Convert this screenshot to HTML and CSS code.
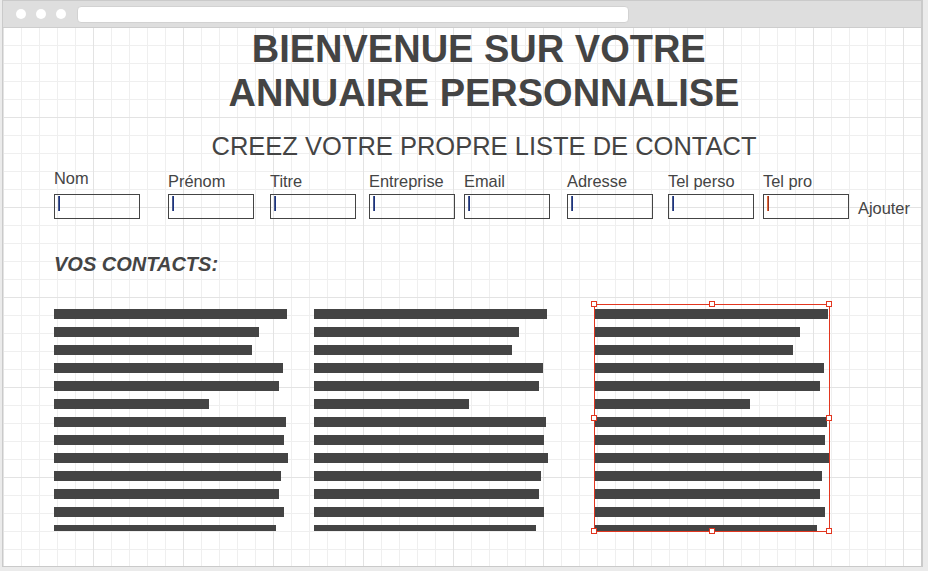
FILE: index.html
```html
<!DOCTYPE html>
<html lang="fr">
<head>
<meta charset="utf-8">
<title>Annuaire personnalisé</title>
<link rel="stylesheet" href="styles.css">
</head>
<body>
<div class="window">
  <div class="chrome">
    <span class="dot"></span><span class="dot"></span><span class="dot"></span>
    <div class="address"></div>
  </div>
  <main class="canvas">
    <header class="header">
      <h1 class="title">BIENVENUE SUR VOTRE&nbsp;<br>ANNUAIRE PERSONNALISE</h1>
      <h2 class="subtitle">CREEZ VOTRE PROPRE LISTE DE CONTACT</h2>
    </header>
    <form class="form">
      <label class="field field--raised"><span class="field-label">Nom</span><span class="input"><span class="caret"></span></span></label>
      <label class="field"><span class="field-label">Prénom</span><span class="input"><span class="caret"></span></span></label>
      <label class="field"><span class="field-label">Titre</span><span class="input"><span class="caret"></span></span></label>
      <label class="field"><span class="field-label">Entreprise</span><span class="input"><span class="caret"></span></span></label>
      <label class="field"><span class="field-label">Email</span><span class="input"><span class="caret"></span></span></label>
      <label class="field"><span class="field-label">Adresse</span><span class="input"><span class="caret"></span></span></label>
      <label class="field"><span class="field-label">Tel perso</span><span class="input"><span class="caret"></span></span></label>
      <label class="field field--active"><span class="field-label">Tel pro</span><span class="input"><span class="caret"></span></span></label>
      <span class="submit">Ajouter</span>
    </form>
    <h3 class="section-title">VOS CONTACTS:</h3>
    <div class="contacts">
      <div class="card">
        <div class="lines">
          <span class="bar"></span><span class="bar"></span><span class="bar"></span><span class="bar"></span><span class="bar"></span><span class="bar"></span><span class="bar"></span><span class="bar"></span><span class="bar"></span><span class="bar"></span><span class="bar"></span><span class="bar"></span><span class="bar"></span>
        </div>
      </div>
      <div class="card">
        <div class="lines">
          <span class="bar"></span><span class="bar"></span><span class="bar"></span><span class="bar"></span><span class="bar"></span><span class="bar"></span><span class="bar"></span><span class="bar"></span><span class="bar"></span><span class="bar"></span><span class="bar"></span><span class="bar"></span><span class="bar"></span>
        </div>
      </div>
      <div class="card">
        <div class="lines">
          <span class="bar"></span><span class="bar"></span><span class="bar"></span><span class="bar"></span><span class="bar"></span><span class="bar"></span><span class="bar"></span><span class="bar"></span><span class="bar"></span><span class="bar"></span><span class="bar"></span><span class="bar"></span><span class="bar"></span>
        </div>
        <div class="selection">
          <span class="handle handle--tl"></span>
          <span class="handle handle--tc"></span>
          <span class="handle handle--tr"></span>
          <span class="handle handle--ml"></span>
          <span class="handle handle--mr"></span>
          <span class="handle handle--bl"></span>
          <span class="handle handle--bc"></span>
          <span class="handle handle--br"></span>
        </div>
      </div>
    </div>
  </main>
</div>
</body>
</html>
```

FILE: styles.css
```css
body {
  margin: 0;
  background: #ebebeb;
  font-family: "Liberation Sans", Arial, sans-serif;
  color: #444;
}

.window {
  width: 921px;
  height: 567px;
  box-sizing: border-box;
  margin-left: 2px;
  border: 1px solid #cacaca;
  border-right-width: 2px;
  background: #fff;
  display: flex;
  flex-direction: column;
}

.chrome {
  height: 26px;
  flex: none;
  background: #dedede;
  border-bottom: 1px solid #cdcdcd;
  display: flex;
  align-items: center;
  gap: 10px;
  padding-left: 13px;
}

.dot {
  width: 10px;
  height: 10px;
  border-radius: 50%;
  background: #fff;
}

.address {
  width: 552px;
  height: 17px;
  box-sizing: border-box;
  margin-left: 1px;
  background: #fff;
  border: 1px solid #d2d2d2;
  border-radius: 4px;
}

.canvas {
  flex: 1;
  padding-left: 51px;
  background-color: #fff;
  background-image:
    linear-gradient(to right, #e3e3e3 1px, transparent 1px),
    linear-gradient(to bottom, #e3e3e3 1px, transparent 1px),
    linear-gradient(to right, #efefef 1px, transparent 1px),
    linear-gradient(to bottom, #efefef 1px, transparent 1px);
  background-size: 90px 90px, 90px 90px, 18px 18px, 18px 18px;
  background-position: 0 -1px;
}

.header {
  width: 860px;
  text-align: center;
}

.title {
  margin: -1px 0 0;
  font-size: 38px;
  line-height: 44px;
  font-weight: bold;
}

.subtitle {
  margin: 16px 0 0;
  font-size: 25.5px;
  line-height: 30px;
  font-weight: normal;
}

.form {
  margin-top: 9px;
  display: grid;
  grid-template-columns: 114px 102px 99px 95px 103px 101px 95px 95px auto;
  align-items: start;
}

.field {
  display: flex;
  flex-direction: column;
}

.field-label {
  font-size: 16.4px;
  line-height: 18px;
  margin-top: 2px;
  margin-bottom: 4px;
}

.field--raised .field-label {
  margin-top: -1px;
  margin-bottom: 7px;
}

.input {
  width: 86px;
  height: 25px;
  box-sizing: border-box;
  border: 1px solid #444;
  display: flex;
  padding: 1px 0 0 3px;
}

.caret {
  width: 2px;
  height: 15px;
  background: linear-gradient(to right, #4a5a8c 50%, #1b3380 50%);
}

.field--active .caret {
  background: linear-gradient(to right, #e0703a 50%, #9a3326 50%);
}

.submit {
  align-self: end;
  font-size: 16.4px;
  line-height: 18px;
  margin-bottom: 2px;
}

.section-title {
  margin: 33px 0 0;
  font-size: 20px;
  line-height: 24px;
  font-weight: bold;
  font-style: italic;
}

.contacts {
  margin-top: 33px;
  display: grid;
  grid-template-columns: 260px 281px 236px;
}

.card {
  position: relative;
}

.lines {
  height: 222px;
  overflow: hidden;
  display: flex;
  flex-direction: column;
  gap: 8px;
}

.bar {
  flex: none;
  height: 10px;
  background: #444;
}

.bar:nth-child(1) { width: 233px; }
.bar:nth-child(2) { width: 205px; }
.bar:nth-child(3) { width: 198px; }
.bar:nth-child(4) { width: 229px; }
.bar:nth-child(5) { width: 225px; }
.bar:nth-child(6) { width: 155px; }
.bar:nth-child(7) { width: 232px; }
.bar:nth-child(8) { width: 230px; }
.bar:nth-child(9) { width: 234px; }
.bar:nth-child(10) { width: 227px; }
.bar:nth-child(11) { width: 225px; }
.bar:nth-child(12) { width: 230px; }
.bar:nth-child(13) { width: 222px; }

.selection {
  position: absolute;
  top: -5px;
  left: -1px;
  width: 236px;
  height: 228px;
  box-sizing: border-box;
  border: 1px solid #e2361f;
}

.handle {
  position: absolute;
  width: 6px;
  height: 6px;
  box-sizing: border-box;
  border: 1px solid #e2361f;
  background: #fff;
}

.handle--tl { top: -4px; left: -4px; }
.handle--tc { top: -4px; left: calc(50% - 3px); }
.handle--tr { top: -4px; right: -3px; }
.handle--ml { top: calc(50% - 3px); left: -4px; }
.handle--mr { top: calc(50% - 3px); right: -3px; }
.handle--bl { bottom: -3px; left: -4px; }
.handle--bc { bottom: -3px; left: calc(50% - 3px); }
.handle--br { bottom: -3px; right: -3px; }
```
